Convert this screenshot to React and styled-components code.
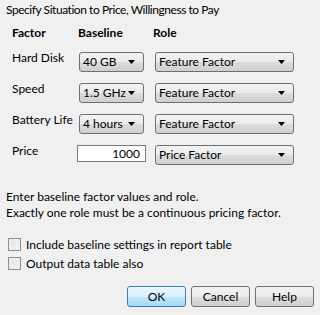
import React from 'react'
import styled, { createGlobalStyle } from 'styled-components'

const GlobalStyle = createGlobalStyle`
  body {
    margin: 0;
    background: #f0f0f0;
    font-family: Lato, "Liberation Sans", sans-serif;
    font-size: 12px;
    color: #000;
  }
`;

const factors = [
  { name: 'Hard Disk', baseline: '40 GB', role: 'Feature Factor' },
  { name: 'Speed', baseline: '1.5 GHz', role: 'Feature Factor' },
  { name: 'Battery Life', baseline: '4 hours', role: 'Feature Factor' },
  { name: 'Price', value: '1000', role: 'Price Factor' },
];

const Arrow = () => (
  <svg width="7" height="4" viewBox="0 0 7 4">
    <path d="M0 0 L7 0 L3.5 4 Z" fill="#000" />
  </svg>
);

const Select = ({ value, width }) => (
  <SelectBox $width={width}>
    <span>{value}</span>
    <Arrow />
  </SelectBox>
);

const App = () => {
  return (
    <>
      <GlobalStyle />
      <Dialog>
        <Title>Specify Situation to Price, Willingness to Pay</Title>
        <FactorGrid>
          <Header>Factor</Header>
          <Header $shift={-1}>Baseline</Header>
          <Header $shift={-2}>Role</Header>
          {factors.map((f) => (
            <React.Fragment key={f.name}>
              <Label>{f.name}</Label>
              {f.value ? <NumberInput>{f.value}</NumberInput> : <Select value={f.baseline} width={65} />}
              <Select value={f.role} width={139} />
            </React.Fragment>
          ))}
        </FactorGrid>
        <Note>
          Enter baseline factor values and role.<br />
          Exactly one role must be a continuous pricing factor.
        </Note>
        <Checks>
          <CheckRow><Box />Include baseline settings in report table</CheckRow>
          <CheckRow><Box />Output data table also</CheckRow>
        </Checks>
        <Buttons>
          <Button $primary>OK</Button>
          <Button>Cancel</Button>
          <Button>Help</Button>
        </Buttons>
      </Dialog>
    </>
  )
}

export default App

const Dialog = styled.div`
  width: 320px;
  height: 315px;
  box-sizing: border-box;
  padding: 2px 6px 0 6px;
  display: flex;
  flex-direction: column;
  overflow: hidden;
`;

const Title = styled.div`
  line-height: 16px;
  letter-spacing: -0.45px;
`;

const FactorGrid = styled.div`
  display: grid;
  grid-template-columns: 67px 76px 139px;
  grid-template-rows: 16px;
  grid-auto-rows: 20px;
  row-gap: 11px;
  margin: 7px 0 0 6px;
  align-items: start;
`;

const Header = styled.div`
  font-weight: 700;
  line-height: 16px;
  margin-left: ${(p) => p.$shift || 0}px;
  margin-bottom: -5px;
`;

const Label = styled.div`
  line-height: 16px;
  margin-top: -2px;
`;

const SelectBox = styled.div`
  width: ${(p) => p.$width}px;
  height: 20px;
  box-sizing: border-box;
  border: 1px solid #707070;
  border-radius: 3px;
  background: linear-gradient(#f2f2f2 0%, #ebebeb 50%, #dddddd 50%, #cfcfcf 100%);
  display: flex;
  align-items: center;
  justify-content: space-between;
  padding: 0 8px 0 3px;
  line-height: 18px;
  & svg { flex: none; }
`;

const NumberInput = styled.div`
  width: 69px;
  height: 17px;
  box-sizing: border-box;
  margin-left: -2px;
  border: 1px solid #7a7a7a;
  background: #fff;
  text-align: right;
  padding-right: 5px;
  line-height: 15px;
`;

const Note = styled.div`
  line-height: 16px;
  margin-top: 24px;
`;

const Checks = styled.div`
  display: flex;
  flex-direction: column;
  gap: 6px;
  margin-top: 17px;
`;

const CheckRow = styled.div`
  display: flex;
  align-items: center;
  gap: 5px;
  margin-left: 2px;
  line-height: 13px;
`;

const Box = styled.span`
  width: 13px;
  height: 13px;
  box-sizing: border-box;
  border: 1px solid #8e8f8f;
  background: linear-gradient(135deg, #dcdcdc, #fbfbfb);
  box-shadow: inset 0 0 0 2px #eeeeee;
  flex: none;
`;

const Buttons = styled.div`
  display: flex;
  justify-content: flex-end;
  gap: 5px;
  margin-top: 16px;
`;

const Button = styled.div`
  width: 59px;
  height: 21px;
  box-sizing: border-box;
  border: 1px solid ${(p) => (p.$primary ? '#3c7fb1' : '#707070')};
  border-radius: 3px;
  background: ${(p) =>
    p.$primary
      ? 'linear-gradient(#eaf6fd 0%, #d9f0fc 50%, #bee6fd 50%, #a7d9f5 100%)'
      : 'linear-gradient(#f2f2f2 0%, #ebebeb 50%, #dddddd 50%, #cfcfcf 100%)'};
  display: flex;
  align-items: center;
  justify-content: center;
  line-height: 16px;
`;
